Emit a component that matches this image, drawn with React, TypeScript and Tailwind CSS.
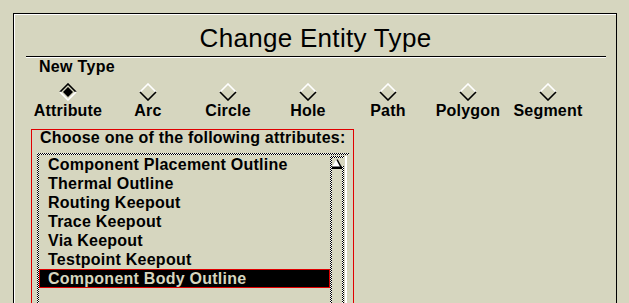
import React from "react";

const CHECK =
  "bg-[repeating-conic-gradient(#000_0_25%,#fff_0_50%)] bg-[length:2px_2px]";

function Diamond({ selected }: { selected: boolean }) {
  const light = "#ffffff";
  const dark = "#000000";
  const top = selected ? dark : light;
  const bot = selected ? light : dark;
  return (
    <svg width="18" height="18" viewBox="0 0 18 18" className="block">
      <polyline points="1,9 9,1 17,9" fill="none" stroke={top} strokeWidth="1.6" />
      <polyline points="1,9 9,17 17,9" fill="none" stroke={bot} strokeWidth="1.6" />
      {selected && <polygon points="9,4 14,9 9,14 4,9" fill="#000" />}
    </svg>
  );
}

const types = ["Attribute", "Arc", "Circle", "Hole", "Path", "Polygon", "Segment"];
const items = [
  "Component Placement Outline",
  "Thermal Outline",
  "Routing Keepout",
  "Trace Keepout",
  "Via Keepout",
  "Testpoint Keepout",
  "Component Body Outline",
];

export default function App() {
  return (
    <div className="w-[629px] h-[303px] overflow-hidden bg-[#d6d6bf] pt-[13px] pl-[13px] font-['Liberation_Sans',Arial,sans-serif] text-black">
      <div className="w-[604px] h-[300px] bg-black pl-[1px] pt-[1px] pr-[1px]">
        <div className="h-full bg-white pl-[1px] pt-[1px]">
          <div className="h-full bg-[#d6d6bf] overflow-hidden">
            <div className="pt-[8px] text-center text-[26px] leading-[30px] tracking-[0.3px]">
              Change Entity Type
            </div>
            <div className="mt-[3px] ml-[11px] w-[580px] h-[1px] bg-black" />
            <div className="ml-[11px] w-[580px] h-[1px] bg-white" />
            <div className="mt-[1px] ml-[24px] text-[16px] leading-[16px] font-bold tracking-[0.3px]">
              New Type
            </div>
            <div className="mt-[8px] ml-[13px] flex">
              {types.map((t, i) => (
                <div key={t} className="w-[80px] flex flex-col items-center">
                  <Diamond selected={i === 0} />
                  <div className="mt-[2px] text-[16px] leading-[16px] font-bold tracking-[0.2px] whitespace-nowrap">
                    {t}
                  </div>
                </div>
              ))}
            </div>
            <div className="mt-[10px] ml-[16px] w-[323px] h-[200px] bg-[#e00000] p-[1px]">
              <div className="h-full bg-[#d6d6bf]">
                <div className="pl-[8px] text-[16px] leading-[15px] font-bold tracking-[0.22px] whitespace-nowrap">
                  Choose one of the following attributes:
                </div>
                <div className={`mt-[8px] ml-[5px] w-[312px] h-[160px] pt-[2px] pl-[2px] ${CHECK}`}>
                  <div className="h-full bg-[#d6d6bf] flex">
                    <div className="w-[291px]">
                      {items.map((it, i) => {
                        const sel = i === items.length - 1;
                        return sel ? (
                          <div key={it} className="h-[19px] bg-[#e00000] p-[1px]">
                            <div className="h-full bg-black pl-[8px] text-[#d6d6bf] text-[16px] leading-[17px] font-bold tracking-[0.25px] whitespace-nowrap">
                              {it}
                            </div>
                          </div>
                        ) : (
                          <div
                            key={it}
                            className="h-[19px] pl-[9px] pt-[1px] text-[16px] leading-[17px] font-bold tracking-[0.25px] whitespace-nowrap"
                          >
                            {it}
                          </div>
                        );
                      })}
                    </div>
                    <div className="mt-[1px] w-[19px] flex">
                      <div className={`w-[2px] ${CHECK}`} />
                      <div className="w-[12px] flex flex-col">
                        <div className={`h-[2px] shrink-0 ${CHECK}`} />
                        <div className="flex-1 flex">
                          <div className="w-[10px] pt-[1px] flex flex-col items-center">
                            <svg width="10" height="10" viewBox="0 0 10 10" className="block">
                              <polygon points="5,1 9.5,9.5 0.5,9.5" fill="#fff" />
                              <line x1="5" y1="0.5" x2="0.5" y2="9" stroke="#fff" strokeWidth="1.5" />
                              <line x1="5" y1="0.5" x2="9.5" y2="9" stroke="#000" strokeWidth="1.5" />
                              <line x1="0" y1="8.75" x2="10" y2="8.75" stroke="#000" strokeWidth="2.5" />
                            </svg>
                          </div>
                          <div className={`mt-[8px] w-[2px] ${CHECK}`} />
                        </div>
                      </div>
                      <div className="w-[1px]" />
                      <div className="w-[2px] bg-white" />
                      <div className="w-[2px]" />
                    </div>
                  </div>
                </div>
              </div>
            </div>
          </div>
        </div>
      </div>
    </div>
  );
}
